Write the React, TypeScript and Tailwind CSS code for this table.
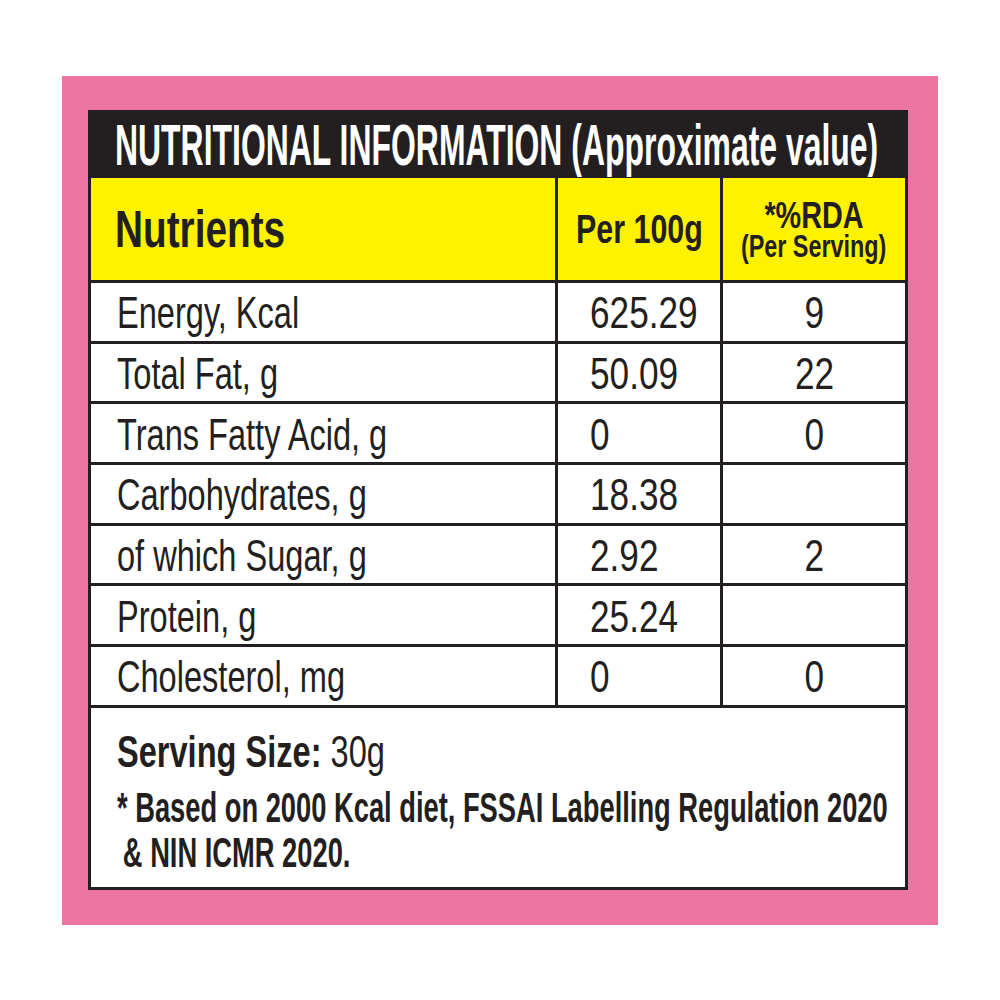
const rows = [
  ["Energy, Kcal", "625.29", "9"],
  ["Total Fat, g", "50.09", "22"],
  ["Trans Fatty Acid, g", "0", "0"],
  ["Carbohydrates, g", "18.38", ""],
  ["of which Sugar, g", "2.92", "2"],
  ["Protein, g", "25.24", ""],
  ["Cholesterol, mg", "0", "0"],
]

export default function App() {
  return (
    <div className="h-[1000px] w-[1000px] bg-white pl-[62px] pt-[76px] font-['Liberation_Sans',Arial,sans-serif] text-[#231f20]">
      <div className="h-[849px] w-[876px] bg-[#ec74a0] pl-[26px] pt-[34px]">
        <div className="flex h-[780px] w-[820px] flex-col overflow-hidden border-[3px] border-[#231f20] bg-white">
          {/* Title bar */}
          <div className="flex h-[65px] shrink-0 items-center bg-[#231f20] pl-[24px]">
            <span className="inline-block origin-left scale-x-[0.56] whitespace-nowrap text-[57px] font-bold leading-none text-white">
              NUTRITIONAL INFORMATION (Approximate value)
            </span>
          </div>

          {/* Header row */}
          <div className="grid h-[105px] shrink-0 grid-cols-[467px_165px_182px] border-b-[3px] border-[#231f20] bg-[#fff200]">
            <div className="flex items-center border-r-[3px] border-[#231f20] pl-[24px]">
              <span className="inline-block origin-left scale-x-[0.76] whitespace-nowrap text-[51px] font-bold leading-none">
                Nutrients
              </span>
            </div>
            <div className="flex items-center justify-center border-r-[3px] border-[#231f20]">
              <span className="inline-block scale-x-[0.76] whitespace-nowrap text-[40px] font-bold leading-none">
                Per 100g
              </span>
            </div>
            <div className="flex flex-col items-center justify-center pt-[4px]">
              <span className="block scale-x-[0.8] whitespace-nowrap text-[36px] font-bold leading-[30px]">
                *%RDA
              </span>
              <span className="block scale-x-[0.73] whitespace-nowrap text-[32px] font-bold leading-[30px]">
                (Per Serving)
              </span>
            </div>
          </div>

          {/* Data rows */}
          {rows.map(([name, per100, rda]) => (
            <div
              key={name}
              className="grid h-[60.7px] shrink-0 grid-cols-[467px_165px_182px] border-b-[3px] border-[#231f20]"
            >
              <div className="flex items-center border-r-[3px] border-[#231f20] pl-[26px] pt-[3px]">
                <span className="inline-block origin-left scale-x-[0.74] whitespace-nowrap text-[44px] leading-none">
                  {name}
                </span>
              </div>
              <div className="flex items-center border-r-[3px] border-[#231f20] pl-[32px] pt-[3px]">
                <span className="inline-block origin-left scale-x-[0.8] whitespace-nowrap text-[44px] leading-none">
                  {per100}
                </span>
              </div>
              <div className="flex items-center justify-center pt-[3px]">
                <span className="inline-block scale-x-[0.8] whitespace-nowrap text-[44px] leading-none">
                  {rda}
                </span>
              </div>
            </div>
          ))}

          {/* Footer */}
          <div className="flex-1 pl-[26px] pt-[22px]">
            <div className="origin-left scale-x-[0.74] whitespace-nowrap text-[44px] leading-[44px]">
              <span className="font-bold">Serving Size:</span> 30g
            </div>
            <div className="mt-[11px] origin-left scale-x-[0.65] whitespace-nowrap text-[42px] font-bold leading-[45px]">
              * Based on 2000 Kcal diet, FSSAI Labelling Regulation 2020
            </div>
            <div className="origin-left scale-x-[0.65] whitespace-nowrap pl-[9px] text-[42px] font-bold leading-[45px]">
              &amp; NIN ICMR 2020.
            </div>
          </div>
        </div>
      </div>
    </div>
  )
}
